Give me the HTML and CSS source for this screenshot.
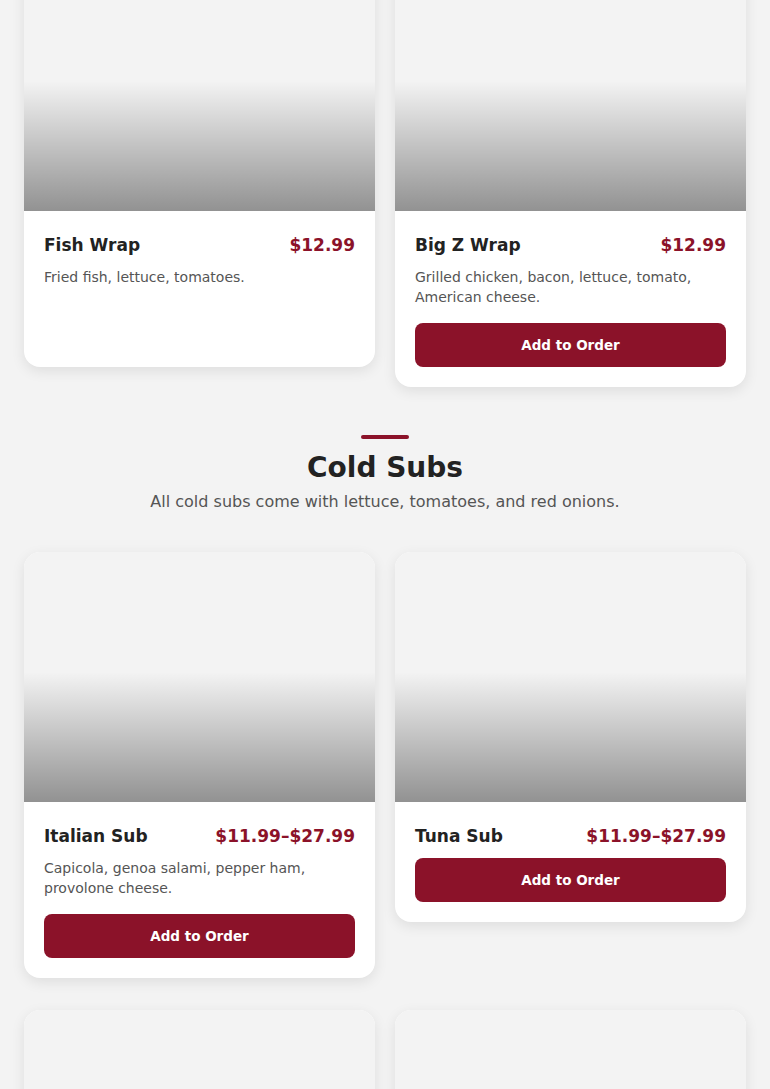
FILE: index.html
```html
<!DOCTYPE html>
<html lang="en">
<head>
    <meta charset="UTF-8">
    <meta name="viewport" content="width=device-width, initial-scale=1.0">
    <title>Menu</title>
    <link rel="stylesheet" href="styles.css">
</head>
<body>
    <main class="menu">

        <!-- Wraps (scrolled past the heading) -->
        <section class="menu-section menu-section--scrolled">
            <div class="item-grid">
                <article class="item-card">
                    <div class="item-photo"></div>
                    <div class="item-body">
                        <div class="item-head">
                            <h3 class="item-name">Fish Wrap</h3>
                            <span class="item-price">$12.99</span>
                        </div>
                        <p class="item-desc">Fried fish, lettuce, tomatoes.</p>
                        <button class="add-btn add-btn--hidden" type="button">Add to Order</button>
                    </div>
                </article>
                <article class="item-card">
                    <div class="item-photo"></div>
                    <div class="item-body">
                        <div class="item-head">
                            <h3 class="item-name">Big Z Wrap</h3>
                            <span class="item-price">$12.99</span>
                        </div>
                        <p class="item-desc">Grilled chicken, bacon, lettuce, tomato, American cheese.</p>
                        <button class="add-btn" type="button">Add to Order</button>
                    </div>
                </article>
            </div>
        </section>

        <section class="menu-section">
            <header class="section-head">
                <span class="section-bar"></span>
                <h2 class="section-title">Cold Subs</h2>
                <p class="section-note">All cold subs come with lettuce, tomatoes, and red onions.</p>
            </header>
            <div class="item-grid">
                <article class="item-card">
                    <div class="item-photo"></div>
                    <div class="item-body">
                        <div class="item-head">
                            <h3 class="item-name">Italian Sub</h3>
                            <span class="item-price">$11.99–$27.99</span>
                        </div>
                        <p class="item-desc">Capicola, genoa salami, pepper ham, provolone cheese.</p>
                        <button class="add-btn" type="button">Add to Order</button>
                    </div>
                </article>
                <article class="item-card">
                    <div class="item-photo"></div>
                    <div class="item-body">
                        <div class="item-head">
                            <h3 class="item-name">Tuna Sub</h3>
                            <span class="item-price">$11.99–$27.99</span>
                        </div>
                        <button class="add-btn" type="button">Add to Order</button>
                    </div>
                </article>
                <article class="item-card">
                    <div class="item-photo"></div>
                </article>
                <article class="item-card">
                    <div class="item-photo"></div>
                </article>
            </div>
        </section>

    </main>
</body>
</html>
```

FILE: styles.css
```css
body {
    margin: 0;
    background: #f3f3f3;
    font-family: "DejaVu Sans", "Noto Sans", sans-serif;
    color: #222;
}
.menu {
    padding: 0 24px 48px;
}
/* page is photographed scrolled a little into the wraps */
.menu-section--scrolled {
    margin-top: -39px;
}
.menu-section + .menu-section {
    margin-top: 48px;
}
.section-head {
    text-align: center;
    margin-bottom: 38px;
}
.section-bar {
    display: block;
    width: 48px;
    height: 4px;
    margin: 0 auto 11px;
    border-radius: 2px;
    background: #8b1229;
}
.section-title {
    margin: 0;
    font-size: 28px;
    line-height: 36px;
    font-weight: 700;
    color: #222;
}
.section-note {
    margin: 4px 0 0;
    font-size: 16px;
    line-height: 24px;
    color: #555;
}
.item-grid {
    display: grid;
    grid-template-columns: 1fr 1fr;
    column-gap: 20px;
    row-gap: 32px;
    align-items: start;
}
.item-card {
    background: #fff;
    border-radius: 16px;
    overflow: hidden;
    box-shadow: 0 4px 14px rgba(0, 0, 0, 0.09);
}
.item-photo {
    height: 250px;
    background: linear-gradient(to bottom, rgba(0, 0, 0, 0) 48%, rgba(0, 0, 0, 0.4)), #f3f3f3;
}
.item-body {
    padding: 20px;
}
.item-head {
    display: flex;
    justify-content: space-between;
    align-items: center;
    gap: 12px;
    margin-bottom: 8px;
}
.item-name {
    margin: 0;
    font-size: 17px;
    line-height: 28px;
    font-weight: 600;
    color: #222;
}
.item-price {
    font-size: 17px;
    line-height: 28px;
    font-weight: 700;
    color: #8b1229;
    white-space: nowrap;
}
.item-desc {
    margin: 0 0 16px;
    font-size: 14px;
    line-height: 20px;
    color: #555;
}
.add-btn {
    display: block;
    width: 100%;
    height: 44px;
    border: 0;
    border-radius: 8px;
    background: #8b1229;
    color: #fff;
    font-family: inherit;
    font-size: 13.5px;
    font-weight: 600;
    cursor: pointer;
}
.add-btn--hidden { visibility: hidden; }
```
